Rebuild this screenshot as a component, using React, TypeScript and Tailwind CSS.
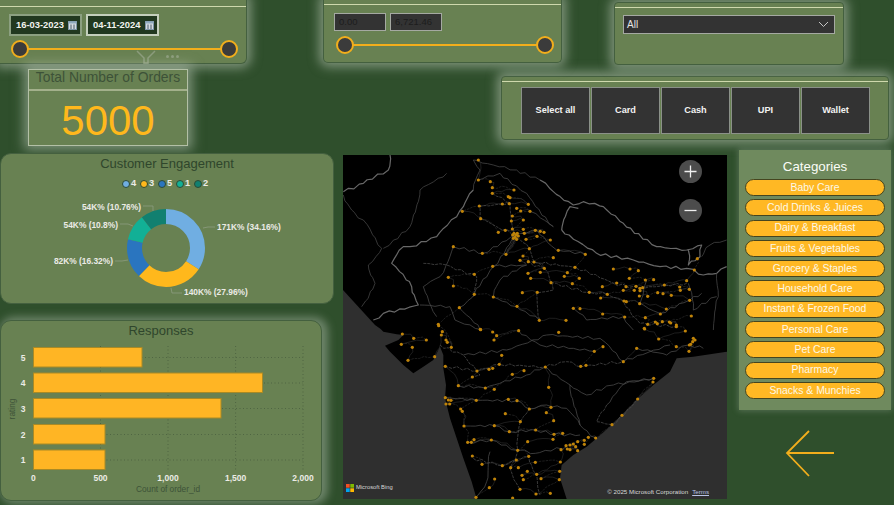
const panelShadow = "shadow-[0_0_11px_4px_rgba(205,215,200,0.5)]";

const payments = ["Select all", "Card", "Cash", "UPI", "Wallet"];
const categories = [
  "Baby Care",
  "Cold Drinks & Juices",
  "Dairy & Breakfast",
  "Fruits & Vegetables",
  "Grocery & Staples",
  "Household Care",
  "Instant & Frozen Food",
  "Personal Care",
  "Pet Care",
  "Pharmacy",
  "Snacks & Munchies",
];

const donut = [
  { pct: 34.16, color: "#70aee2" },
  { pct: 27.96, color: "#ffb81c" },
  { pct: 16.32, color: "#2a75bf" },
  { pct: 10.8, color: "#12b096" },
  { pct: 10.76, color: "#118070" },
];
const legend = [
  { name: "4", color: "#70aee2" },
  { name: "3", color: "#ffb81c" },
  { name: "5", color: "#2a75bf" },
  { name: "1", color: "#12b096" },
  { name: "2", color: "#118070" },
];
const donutLabels = [
  { text: "171K% (34.16%)", x: 217, y: 77, anchor: "start", line: "M203 75 L208 74 L215 74" },
  { text: "140K% (27.96%)", x: 184, y: 142, anchor: "start", line: "M171 135 L172 140 L182 140" },
  { text: "82K% (16.32%)", x: 113, y: 111, anchor: "end", line: "M128 107 L122 108 L115 108" },
  { text: "54K% (10.8%)", x: 118, y: 75, anchor: "end", line: "M133 73 L128 71 L120 71" },
  { text: "54K% (10.76%)", x: 141, y: 57, anchor: "end", line: "M153 58 L153 53 L143 53" },
];
const bars = [
  { label: "5", y: 347.5, end: 142 },
  { label: "4", y: 373, end: 262.5 },
  { label: "3", y: 398.5, end: 221 },
  { label: "2", y: 424.5, end: 105 },
  { label: "1", y: 450, end: 105 },
];
const ticks = [
  { label: "0", x: 33.3 },
  { label: "500", x: 100.5 },
  { label: "1,000", x: 168 },
  { label: "1,500", x: 235.6 },
  { label: "2,000", x: 303 },
];

// dots read off the map, in zoomed crop coords (3x, from 340,150 and 340,325)
const dotsTop = [
  [415, 30], [415, 90], [451, 95], [457, 113], [522, 120], [457, 130], [505, 140], [510, 143], [565, 163], [508, 161], [487, 162], [418, 168], [367, 184], [530, 175], [542, 183], [570, 184], [517, 198], [422, 206], [514, 213], [550, 210], [517, 237], [550, 238], [586, 241], [601, 244], [612, 247], [475, 247], [496, 241], [553, 250], [591, 259], [558, 268], [631, 270], [520, 265], [528, 255], [535, 258], [525, 262], [518, 255], [530, 268], [522, 250], [532, 250], [340, 290], [427, 310], [498, 313], [568, 296], [655, 301], [736, 313], [549, 318], [640, 323], [540, 331], [565, 335], [582, 336], [458, 349], [613, 355], [705, 352], [820, 357], [870, 357], [895, 362], [1072, 326], [1063, 360], [403, 373], [325, 382], [564, 370], [601, 367], [682, 368], [673, 379], [718, 385], [572, 385], [868, 385], [916, 390], [941, 389], [1040, 392], [340, 408], [633, 398], [697, 401], [787, 410], [830, 399], [858, 410], [888, 409], [900, 415], [908, 413], [973, 405], [1019, 411], [1021, 421], [1048, 418], [850, 421], [883, 421], [900, 422], [403, 433], [547, 428], [592, 427], [748, 427], [802, 433], [898, 438], [923, 439], [953, 428], [969, 431], [994, 436], [460, 441], [782, 444], [852, 453], [859, 455], [1049, 451], [899, 461], [358, 473], [531, 469], [700, 475], [720, 476], [979, 477], [788, 492], [854, 501], [961, 492], [1054, 498], [295, 523], [598, 511], [678, 511], [916, 503], [923, 523], [946, 516], [952, 521], [967, 515], [988, 516], [992, 519], [1009, 525], [913, 535], [421, 538],
];
const dotsBottom = [
  [187, 27], [221, 40], [259, 45], [184, 58], [217, 67], [204, 106], [284, 95], [307, 20], [304, 30], [318, 45], [322, 52], [334, 67], [296, 2], [422, 14], [458, 21], [470, 32], [462, 45], [536, 17], [656, 22], [914, 12], [1009, 5], [1036, 18], [956, 42], [1060, 40], [1058, 50], [1052, 58], [1065, 45], [1048, 60], [1047, 79], [1009, 65], [789, 65], [763, 79], [890, 70], [485, 91], [316, 124], [478, 118], [458, 130], [447, 133], [411, 138], [397, 156], [552, 137], [517, 148], [616, 126], [722, 124], [738, 121], [850, 110], [941, 160], [939, 171], [355, 182], [436, 189], [463, 193], [626, 187], [893, 222], [316, 218], [325, 225], [333, 226], [318, 237], [329, 237], [409, 226], [505, 223], [531, 227], [568, 252], [633, 247], [619, 263], [362, 252], [367, 259], [496, 266], [846, 271], [641, 287], [541, 290], [372, 303], [463, 302], [508, 320], [587, 315], [816, 299], [642, 328], [668, 325], [639, 343], [383, 352], [394, 352], [402, 344], [454, 345], [563, 350], [767, 339], [745, 337], [733, 346], [733, 358], [713, 350], [700, 357], [690, 360], [678, 362], [707, 365], [682, 372], [690, 374], [713, 377], [663, 374], [533, 376], [566, 394], [397, 393], [426, 418], [487, 422], [529, 405], [512, 428], [535, 428], [586, 412], [661, 411], [562, 439], [546, 451], [550, 464], [590, 448], [659, 439], [603, 461], [658, 464], [464, 462], [448, 488], [540, 493], [588, 507], [631, 505], [408, 517], [518, 519],
];

const top = (x: number, y: number) => `${340 + x / 3},${150 + y / 3}`;
const low = (x: number, y: number) => `${340 + x / 3},${325 + y / 3}`;

// break a straight run into short wobbly bits so lines read as traced roads and borders
function wiggle(pts: number[][], amp: number) {
  const out: number[][] = [pts[0]];
  for (let i = 1; i < pts.length; i++) {
    const [ax, ay] = pts[i - 1];
    const [bx, by] = pts[i];
    const n = Math.max(1, Math.round(Math.hypot(bx - ax, by - ay) / 16));
    for (let k = 1; k <= n; k++) {
      const t = k / n;
      const j = k === n ? 0 : amp;
      out.push([
        ax + (bx - ax) * t + Math.sin(ax * 7.3 + k * 12.9) * j,
        ay + (by - ay) * t + Math.sin(ay * 5.1 + k * 9.7) * j,
      ]);
    }
  }
  return out;
}
const linePts = (pts: number[][], f: (x: number, y: number) => string) => pts.map(([x, y]) => f(x, y)).join(" ");

// extra minor roads between neighbouring towns
function neighbourRoads(dots: number[][]) {
  const out: number[][][] = [];
  dots.forEach((a, i) => {
    const b = dots.slice(i + 1).find((c) => {
      const d = Math.hypot(a[0] - c[0], a[1] - c[1]);
      return d > 18 && d < 85;
    });
    if (b) out.push(wiggle([a, [(a[0] + b[0]) / 2 + 8, (a[1] + b[1]) / 2 - 6], b], 3));
  });
  return out;
}
const minorTop = neighbourRoads(dotsTop);
const minorLow = neighbourRoads(dotsBottom);

const landWest = [[105, 0], [122, 12], [130, 20], [170, 28], [190, 30], [175, 45], [135, 62], [150, 80], [160, 90], [190, 120], [220, 145], [250, 125], [280, 105], [300, 65], [310, 90], [310, 130], [318, 180], [315, 220], [330, 280], [350, 340], [370, 400], [395, 470], [410, 522]];
const landEast = [[680, 522], [660, 460], [665, 420], [700, 390], [740, 365], [770, 340], [815, 300], [850, 265], [895, 220], [940, 180], [990, 140], [1010, 100], [1060, 95], [1160, 80]];

const borders = [
  [[150, 15], [145, 60], [70, 100], [10, 125]],
  [[400, 120], [370, 170], [350, 200], [290, 260], [210, 290], [190, 290], [155, 340], [215, 410], [235, 465], [130, 490], [100, 510]],
  [[600, 90], [640, 125], [700, 165], [730, 155], [790, 170], [850, 220], [950, 290], [1040, 300], [1085, 285], [1080, 320], [1045, 345], [1045, 300]],
  [[665, 240], [690, 170], [715, 175]],
  [[665, 240], [770, 310], [880, 330], [960, 350], [1040, 355], [1090, 375], [1130, 370], [1160, 350]],
  [[1085, 320], [1110, 285], [1160, 270]],
  [[400, 120], [420, 60], [400, 30], [460, 45], [530, 60], [600, 90]],
  [[10, 135], [35, 180], [70, 210], [125, 295], [85, 345], [105, 400], [65, 470]],
  [[1130, 370], [1135, 440], [1120, 540]],
  [[210, 230], [130, 295]],
  [[210, 230], [240, 120], [320, 70]],
];
const roadsTop = [
  [[457, 130], [510, 160], [525, 255], [568, 296], [582, 336], [705, 352], [820, 400], [900, 415], [1040, 400]],
  [[525, 255], [427, 310], [340, 290], [300, 380], [250, 410], [290, 500]],
  [[525, 255], [460, 350], [403, 433], [358, 473], [420, 538]],
  [[540, 331], [613, 355], [640, 420], [590, 430], [600, 510]],
  [[525, 255], [590, 240], [650, 300], [736, 313]],
  [[458, 349], [560, 345], [480, 390], [460, 441], [530, 470], [600, 510]],
  [[633, 398], [748, 427], [802, 433], [850, 453], [900, 520], [1010, 530]],
  [[920, 390], [900, 460], [960, 490], [1050, 450], [1085, 430]],
  [[240, 465], [330, 470], [345, 510], [420, 538]],
  [[510, 160], [420, 170], [420, 205], [470, 230], [525, 255]],
  [[570, 184], [640, 230], [560, 130], [480, 70], [415, 90]],
  [[700, 475], [740, 510], [850, 500], [880, 540]],
  [[250, 340], [320, 345], [410, 380], [400, 440]],
  [[1045, 400], [1060, 480], [1130, 440]],
];
const roadsLow = [
  [[370, 90], [500, 75], [620, 30], [780, 40], [850, 110], [990, 60]],
  [[316, 124], [410, 138], [478, 118], [616, 126], [680, 110], [720, 125], [850, 110]],
  [[355, 182], [436, 189], [560, 150], [616, 126], [690, 180], [720, 300], [767, 339]],
  [[316, 218], [409, 226], [531, 227], [568, 252], [620, 240], [680, 250], [720, 300]],
  [[568, 252], [541, 290], [533, 376], [510, 430], [540, 493]],
  [[372, 303], [463, 302], [508, 320], [587, 315], [642, 328], [720, 330]],
  [[383, 352], [454, 345], [533, 376], [586, 385], [680, 365]],
  [[400, 400], [487, 422], [566, 394], [590, 450], [600, 510]],
  [[800, 240], [860, 170], [940, 160], [820, 180], [740, 210], [690, 180]],
  [[536, 17], [600, 60], [700, 70], [763, 79]],
  [[300, 60], [370, 90], [420, 150], [397, 156]],
  [[890, 70], [980, 90], [1045, 60], [1090, 70]],
  [[450, 380], [440, 470], [410, 515]],
  [[800, 240], [770, 290], [816, 299], [893, 222]],
];

function Slider() {
  return (
    <div className="relative h-[18px] flex items-center">
      <div className="h-[2px] w-full bg-[#f2ae1c]" />
      <div className="absolute -left-[9px] w-[18px] h-[18px] rounded-full bg-[#3b3b3b] border-2 border-[#f2ae1c]" />
      <div className="absolute -right-[9px] w-[18px] h-[18px] rounded-full bg-[#3b3b3b] border-2 border-[#f2ae1c]" />
    </div>
  );
}

function DateInput({ value, light }: { value: string; light?: boolean }) {
  return (
    <div className={`w-[73px] h-[22px] flex items-center bg-[#21381f] border-2 ${light ? "border-[#c4cfbc]" : "border-[#8ca081]"}`}>
      <span className="text-[#f1f3ee] text-[9.4px] font-bold whitespace-nowrap pl-[5px] w-[56px]">{value}</span>
      <svg width="9" height="9" viewBox="0 0 9 9" className="ml-[1px]">
        <rect x="0.5" y="0.5" width="8" height="8" fill="#d5dbe0" stroke="#7f97a8" />
        <rect x="0.5" y="0.5" width="8" height="2" fill="#8faabd" />
        <path d="M3 3.5V8M6 3.5V8" stroke="#4c5f6c" />
      </svg>
    </div>
  );
}

function IndiaMap() {
  return (
    <svg viewBox="343 155 384 344" className="w-[384px] h-[344px] block">
      <rect x="343" y="155" width="384" height="344" fill="#2f2f2f" />
      <polygon
        fill="#000"
        points={`343,155 727,155 727,352 ${linePts([...landEast].reverse(), low)} ${linePts([...landWest].reverse(), low)} 343,290`}
      />
      <g fill="none" strokeLinejoin="round">
        {minorTop.map((r, i) => (
          <polyline key={i} points={linePts(r, top)} stroke="#303030" strokeWidth="0.6" strokeDasharray={i % 2 ? "2.5 1" : undefined} />
        ))}
        {minorLow.map((r, i) => (
          <polyline key={i} points={linePts(r, low)} stroke="#303030" strokeWidth="0.6" strokeDasharray={i % 2 ? "2.5 1" : undefined} />
        ))}
        {roadsTop.map((r, i) => (
          <polyline key={i} points={linePts(wiggle(r, 4), top)} stroke="#484848" strokeWidth="0.8" strokeDasharray={i % 3 === 0 ? "3 1" : undefined} />
        ))}
        {roadsLow.map((r, i) => (
          <polyline key={i} points={linePts(wiggle(r, 4), low)} stroke="#484848" strokeWidth="0.8" strokeDasharray={i % 3 === 1 ? "3 1" : undefined} />
        ))}
        {borders.map((r, i) => (
          <polyline key={i} points={linePts(wiggle(r, 4), top)} stroke={i < 5 ? "#686868" : "#444"} strokeWidth={i < 5 ? 1.2 : 0.8} />
        ))}
      </g>
      <g fill="#c08409">
        {dotsTop.map(([x, y], i) => (
          <circle key={i} cx={340 + x / 3} cy={150 + y / 3} r="1.6" />
        ))}
        {dotsBottom.map(([x, y], i) => (
          <circle key={i} cx={340 + x / 3} cy={325 + y / 3} r="1.6" />
        ))}
      </g>
    </svg>
  );
}

function Donut() {
  const cx = 166;
  const cy = 95;
  const r = 31.5;
  const circ = 2 * Math.PI * r;
  let acc = 0;
  return (
    <svg viewBox="0 0 334 150" className="w-[334px] h-[150px] absolute -left-px -top-px">
      {donut.map((s) => {
        const len = (s.pct / 100) * circ;
        const el = (
          <circle
            key={s.color}
            cx={cx}
            cy={cy}
            r={r}
            fill="none"
            stroke={s.color}
            strokeWidth="15"
            strokeDasharray={`${len} ${circ - len}`}
            strokeDashoffset={-acc}
            transform={`rotate(-90 ${cx} ${cy})`}
          />
        );
        acc += len;
        return el;
      })}
      {donutLabels.map((l) => (
        <g key={l.text}>
          <path d={l.line} fill="none" stroke="#8d9c80" strokeWidth="0.8" />
          <text x={l.x} y={l.y} textAnchor={l.anchor as "start" | "end"} fontSize="8.4" fontWeight="700" fill="#ebebe6">
            {l.text}
          </text>
        </g>
      ))}
    </svg>
  );
}

function BarChart() {
  return (
    <svg viewBox="0 320 322 180" className="w-[322px] h-[180px] absolute -left-px -top-px">
      {ticks.slice(1).map((t) => (
        <line key={t.x} x1={t.x} x2={t.x} y1="346" y2="470" stroke="#4f6542" strokeDasharray="1 2.5" />
      ))}
      {bars.map((b) => (
        <g key={b.label}>
          <line x1="33" x2="303" y1={b.y + 10} y2={b.y + 10} stroke="#4f6542" strokeDasharray="1 2.5" />
          <rect x="33.5" y={b.y} width={b.end - 33.5} height="19.5" fill="#ffb524" stroke="#a98a25" />
          <text x="23" y={b.y + 13} textAnchor="middle" fontSize="8.5" fontWeight="700" fill="#ecece6">
            {b.label}
          </text>
        </g>
      ))}
      {ticks.map((t) => (
        <text key={t.label} x={t.x} y="481" textAnchor="middle" fontSize="8.5" fontWeight="700" fill="#ecece6">
          {t.label}
        </text>
      ))}
      <text x="168" y="491.5" textAnchor="middle" fontSize="8.3" fill="#3d5238">
        Count of order_id
      </text>
      <text transform="translate(15 409) rotate(-90)" textAnchor="middle" fontSize="8.3" fill="#3d5238">
        rating
      </text>
    </svg>
  );
}

export default function App() {
  return (
    <div className="[font-family:Liberation_Sans,Arial,sans-serif] relative w-[894px] h-[505px] overflow-hidden bg-[#2f4f2c]">
      {/* top strip */}
      <div className="flex h-[150px]">
        <div className="w-[247px] shrink-0 relative">
          <div className={`h-[65px] -mt-px bg-[#688152] rounded-br-[6px] border border-l-0 border-[#44603f] pt-[6px] ${panelShadow}`}>
            <div className="h-px bg-[#cfd9ad]" />
            <div className="flex gap-[4px] pl-[9px] mt-[7px]">
              <DateInput value="16-03-2023" />
              <DateInput value="04-11-2024" light />
            </div>
            <div className="relative ml-[20px] mr-[17px] mt-[4px]">
              <Slider />
            </div>
          </div>
          <div className="absolute left-[136px] top-[50px] flex items-start gap-[10px]">
            <svg width="20" height="14" viewBox="0 0 20 14">
              <path d="M1 1 L8 8 V13 H12 V8 L19 1" fill="none" stroke="#8b9c7c" strokeWidth="1.5" />
            </svg>
            <div className="flex gap-[2px] mt-[5px]">
              <span className="w-[3px] h-[3px] rounded-full bg-[#8b9c7c]" />
              <span className="w-[3px] h-[3px] rounded-full bg-[#8b9c7c]" />
              <span className="w-[3px] h-[3px] rounded-full bg-[#8b9c7c]" />
            </div>
          </div>
          <div className={`relative ml-[28px] mt-[5px] w-[160px] h-[77px] bg-[#688152] border border-[#b3c0a6] ${panelShadow}`}>
            <div className="h-[19px] text-center text-[13.9px] leading-[15px] text-[#3d5238]">Total Number of Orders</div>
            <div className="h-[2px] bg-[#a3b08b]" />
            <div className="text-center text-[42px] leading-[60px] text-[#ffb81c]">5000</div>
          </div>
        </div>

        <div className="ml-[76px] flex-1">
          <div className="flex items-start">
            <div className={`w-[239px] h-[64px] -mt-px bg-[#688152] rounded-b-[5px] border border-t-0 border-[#44603f] pt-[5px] ${panelShadow}`}>
              <div className="h-px bg-[#cfd9ad]" />
              <div className="flex gap-[4px] pl-[10px] mt-[8px]">
                <div className="w-[52px] h-[18px] bg-[#333] border border-[#a5a9a2] text-[#1d1d1d] text-[9.5px] leading-[16px] pl-[4px]">0.00</div>
                <div className="w-[52px] h-[18px] bg-[#333] border border-[#a5a9a2] text-[#1d1d1d] text-[9.5px] leading-[16px] pl-[4px]">6,721.46</div>
              </div>
              <div className="relative ml-[21px] mr-[16px] mt-[5px]">
                <Slider />
              </div>
            </div>
            <div className={`ml-[52px] mt-[2px] w-[230px] h-[63px] bg-[#688152] rounded-[4px] border border-[#44603f] pt-[4px] ${panelShadow}`}>
              <div className="h-px bg-[#cfd9ad]" />
              <div className="mx-[8px] mt-[7px] h-[19px] flex items-center justify-between bg-[#333] border border-[#a5a9a2] pl-[3px] pr-[5px]">
                <span className="text-[10px] text-[#e4e4e4]">All</span>
                <svg width="11" height="7" viewBox="0 0 11 7">
                  <path d="M1 1 L5.5 5.5 L10 1" fill="none" stroke="#c4c4c4" strokeWidth="1" />
                </svg>
              </div>
            </div>
          </div>
          <div className={`ml-[178px] mt-[11px] w-[388px] h-[64px] bg-[#688152] rounded-[4px] border border-[#44603f] pt-[4px] ${panelShadow}`}>
            <div className="h-px bg-[#cfd9ad]" />
            <div className="flex gap-px pl-[19px] mt-[5px]">
              {payments.map((p) => (
                <div key={p} className="w-[69px] h-[47px] flex items-center justify-center bg-[#333] border border-[#8b9189] text-[9.2px] font-bold text-[#f2f2f2]">
                  {p}
                </div>
              ))}
            </div>
          </div>
        </div>
      </div>

      {/* charts, map, categories */}
      <div className="flex items-start">
        <div className="w-[334px] shrink-0 pt-[3px]">
          <div className="relative h-[151px] bg-[#688152] rounded-[11px] border border-[#44603f]">
            <Donut />
            <div className="relative text-center text-[13px] leading-[16px] pt-[2px] text-[#2f462c]">Customer Engagement</div>
            <div className="relative flex justify-center items-center mt-[5px] text-[9.3px] font-bold text-[#ebebe6]">
              {legend.map((l) => (
                <span key={l.name} className="flex items-center w-[18px]">
                  <span className="w-[8px] h-[8px] rounded-full border border-[#2d4a34] mr-px" style={{ backgroundColor: l.color }} />
                  {l.name}
                </span>
              ))}
            </div>
          </div>
          <div className="relative mt-[16px] w-[322px] h-[181px] bg-[#688152] rounded-[11px] border border-[#44603f] shadow-[3px_0_8px_3px_rgba(205,215,200,0.4)]">
            <BarChart />
            <div className="relative text-center text-[13px] leading-[16px] pt-[2px] text-[#2f462c]">Responses</div>
          </div>
        </div>

        <div className="relative ml-[9px] mt-[5px] shrink-0 h-[344px]">
          <IndiaMap />
          <div className="absolute right-[25px] top-[5px] w-[23px] h-[23px] rounded-full bg-[#4c4c4c] flex items-center justify-center">
            <svg width="13" height="13" viewBox="0 0 13 13"><path d="M6.5 0.5V12.5M0.5 6.5H12.5" stroke="#f0f0f0" strokeWidth="1.3" /></svg>
          </div>
          <div className="absolute right-[25px] top-[44px] w-[23px] h-[23px] rounded-full bg-[#4c4c4c] flex items-center justify-center">
            <svg width="13" height="13" viewBox="0 0 13 13"><path d="M0.5 6.5H12.5" stroke="#f0f0f0" strokeWidth="1.3" /></svg>
          </div>
          <div className="absolute left-[3px] bottom-[7px] flex items-center gap-[2px]">
            <svg width="8" height="8" viewBox="0 0 8 8">
              <rect width="3.7" height="3.7" fill="#f25022" />
              <rect x="4.3" width="3.7" height="3.7" fill="#7fba00" />
              <rect y="4.3" width="3.7" height="3.7" fill="#00a4ef" />
              <rect x="4.3" y="4.3" width="3.7" height="3.7" fill="#ffb900" />
            </svg>
            <span className="text-[5.8px] text-[#d8d8d8]">Microsoft Bing</span>
          </div>
          <div className="absolute right-[18px] bottom-[3px] flex items-center gap-[4px] text-[6.2px] text-[#d8d8d8]">
            <span>© 2025 Microsoft Corporation</span>
            <span className="underline text-[#b7c3e6]">Terms</span>
          </div>
        </div>

        <div className="ml-[12px] shrink-0">
          <div className="w-[152px] h-[260px] bg-[#6f8a5e] shadow-[0_0_6px_1px_rgba(205,215,200,0.25)] pt-[8px] px-[6px]">
            <div className="text-center text-[13.33px] leading-[18px] text-[#fbfdf7] mb-[3px]">Categories</div>
            <div className="flex flex-col gap-[3.3px]">
              {categories.map((c) => (
                <div key={c} className="h-[17px] flex items-center justify-center rounded-full bg-[#ffb824] border border-[#45451f] text-[10.4px] text-[#fdf8e8]">
                  {c}
                </div>
              ))}
            </div>
          </div>
          <div className="flex justify-center mt-[19px] -ml-[10px]">
            <svg width="50" height="50" viewBox="0 0 50 50">
              <path d="M49 24 H2 M24 2 L2 24 L24 47" fill="none" stroke="#f2ae1c" strokeWidth="1.8" />
            </svg>
          </div>
        </div>
      </div>
    </div>
  );
}
